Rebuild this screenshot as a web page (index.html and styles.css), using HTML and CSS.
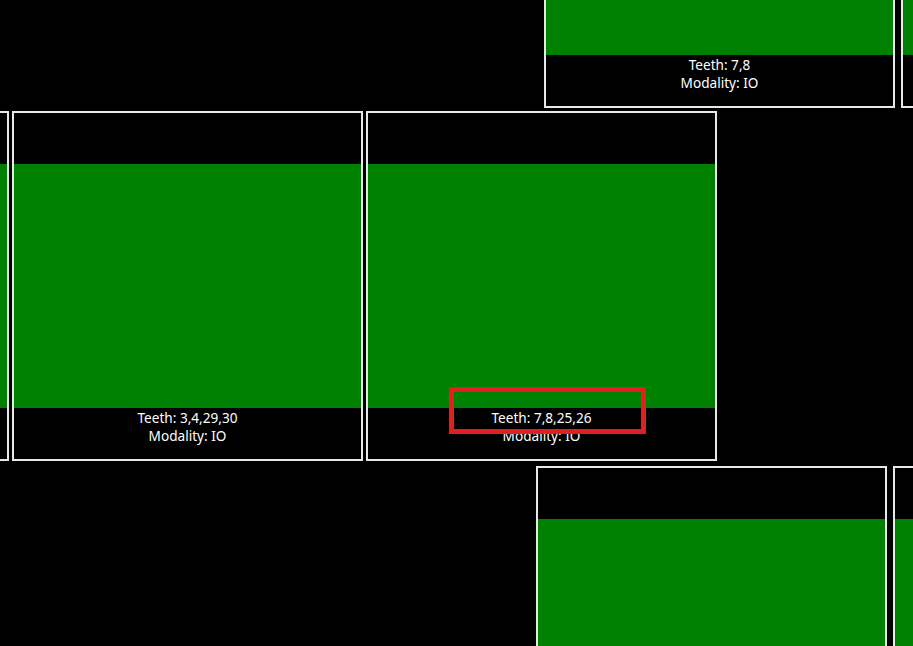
FILE: index.html
```html
<!DOCTYPE html>
<html>
<head>
<meta charset="utf-8">
<link rel="stylesheet" href="styles.css">
</head>
<body>
<div class="viewport">
  <div class="canvas">
    <div class="row row-1">
      <div class="card"><div class="top"></div><div class="img"></div><div class="cap"><div>Teeth: 7,8</div><div>Modality: IO</div></div></div>
      <div class="card"><div class="top"></div><div class="img"></div><div class="cap"></div></div>
    </div>
    <div class="row row-2">
      <div class="card"><div class="top"></div><div class="img"></div><div class="cap"></div></div>
      <div class="card"><div class="top"></div><div class="img"></div><div class="cap"><div>Teeth: 3,4,29,30</div><div>Modality: IO</div></div></div>
      <div class="card selected"><div class="top"></div><div class="img"></div><div class="cap"><div>Teeth: 7,8,25,26</div><div>Modality: IO</div></div><div class="highlight"></div></div>
    </div>
    <div class="row row-3">
      <div class="card"><div class="top"></div><div class="img"></div><div class="cap"></div></div>
      <div class="card"><div class="top"></div><div class="img"></div><div class="cap"></div></div>
    </div>
  </div>
</div>
</body>
</html>
```
FILE: styles.css
```css
html, body {
  margin: 0;
  padding: 0;
  background: #000;
  width: 913px;
  height: 646px;
  overflow: hidden;
}

.viewport {
  width: 913px;
  height: 646px;
  overflow: hidden;
}

.canvas {
  display: flex;
  flex-direction: column;
  margin-top: -242px;
  font-family: "Noto Sans", "Open Sans", sans-serif;
  font-size: 13.6px;
  color: #fff;
}

.row {
  display: flex;
  flex-shrink: 0;
}

.row-1 {
  margin-left: 544px;
  gap: 6px;
}

.row-2 {
  margin-left: -342px;
  margin-top: 3px;
  gap: 3px;
}

.row-3 {
  margin-left: 536px;
  margin-top: 5px;
  gap: 6px;
}

.card {
  position: relative;
  flex: 0 0 auto;
  width: 347px;
  height: 346px;
  border: 2px solid #e8e8e8;
  display: flex;
  flex-direction: column;
  background: #000;
}

.top {
  height: 51px;
  flex-shrink: 0;
}

.img {
  height: 244px;
  flex-shrink: 0;
  background: #008000;
}

.cap {
  padding-top: 1px;
  text-align: center;
  line-height: 18px;
}

.highlight {
  position: absolute;
  left: 81px;
  top: 274px;
  width: 187px;
  height: 37px;
  border: 5px solid #e21e1e;
}
```
